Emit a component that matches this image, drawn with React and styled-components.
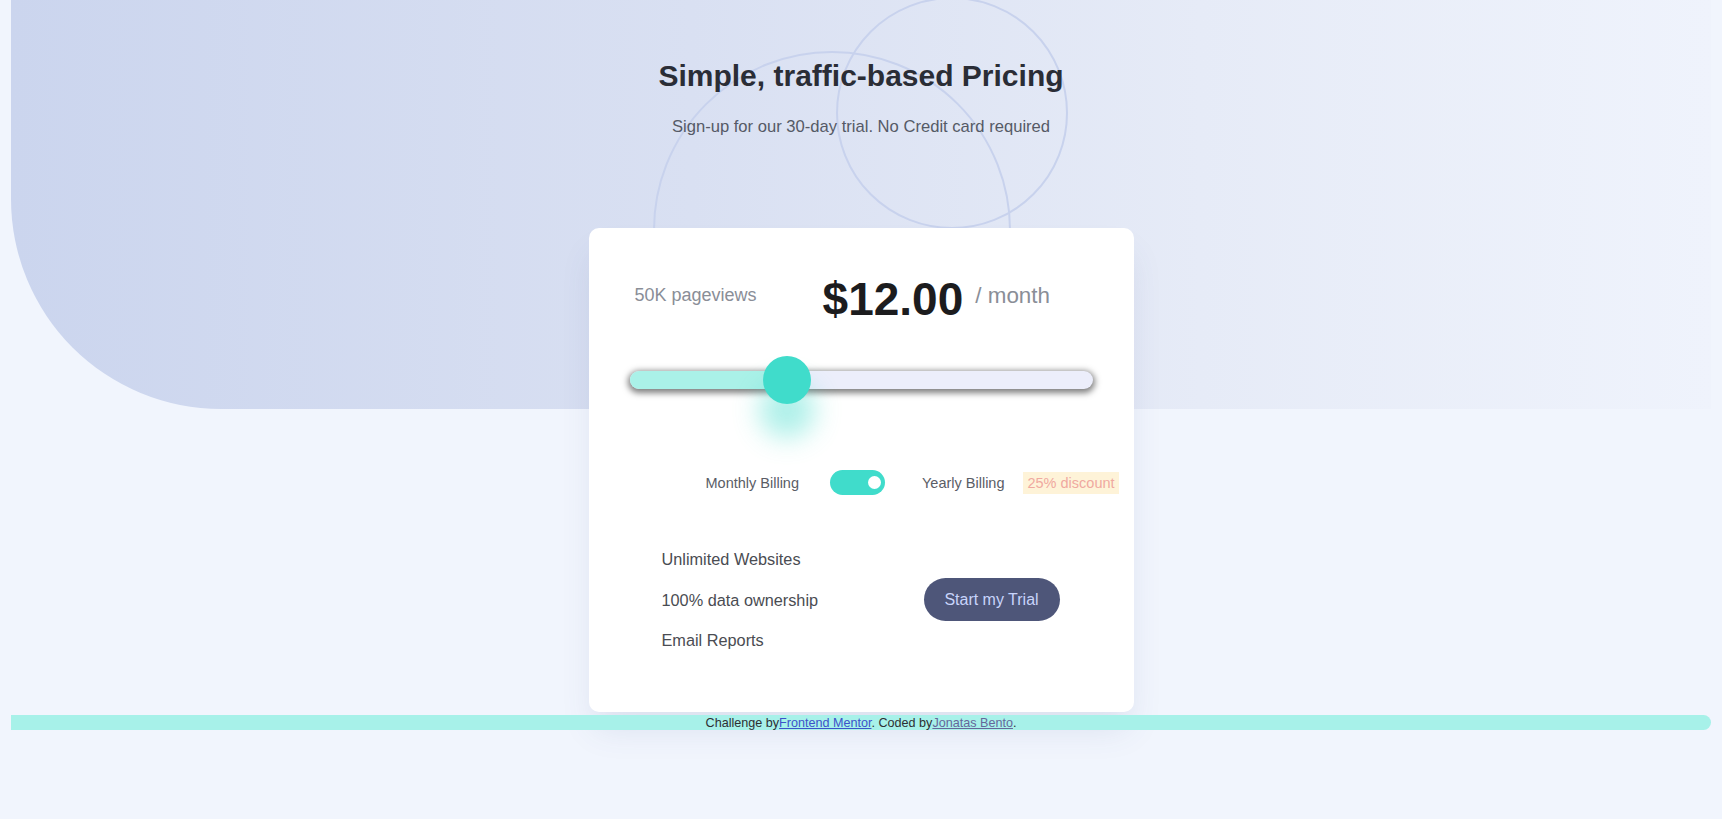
import React from 'react';
import styled, { createGlobalStyle } from 'styled-components';

const GlobalStyle = createGlobalStyle`
  * { box-sizing: border-box; }
  html, body {
    margin: 0;
    padding: 0;
    background: #f1f5fd;
    font-family: "Liberation Sans", Arial, sans-serif;
  }
`;

const Page = styled.div`
  position: relative;
  min-height: 819px;
  padding: 0 11px;
  overflow: hidden;
`;

// top band with the round lower-left corner
const Hero = styled.header`
  position: relative;
  display: flex;
  flex-direction: column;
  align-items: center;
  padding-top: 59px;

  &::before {
    content: '';
    position: absolute;
    top: 0;
    left: 0;
    right: 0;
    height: 409px;
    border-bottom-left-radius: 210px;
    background: linear-gradient(90deg, #cbd5ee 0%, #d9e0f2 40%, #e6ebf7 70%, #eff3fc 100%);
    z-index: 0;
  }
`;

const Pattern = styled.svg`
  position: absolute;
  top: 0;
  left: calc(50% - 211px);
  z-index: 0;
`;

const Title = styled.h1`
  position: relative;
  z-index: 1;
  margin: 0;
  font-size: 30px;
  line-height: 34px;
  font-weight: 700;
  color: #2a2d36;
`;

const Subtitle = styled.p`
  position: relative;
  z-index: 1;
  margin: 24px 0 0;
  font-size: 16.6px;
  line-height: 19px;
  color: #555a66;
`;

const Card = styled.main`
  position: relative;
  z-index: 1;
  width: 545px;
  margin: 92px auto 0;
  padding: 43px 0 51px;
  background: #fff;
  border-radius: 10px;
  box-shadow: 0 22px 34px -6px rgba(70, 85, 140, 0.13);
`;

const PriceRow = styled.div`
  display: flex;
  align-items: center;
  height: 53px;
  padding-left: 46px;
`;

const Views = styled.span`
  margin-top: -4px;
  font-size: 18px;
  color: #8a8e97;
`;

const Price = styled.div`
  display: flex;
  align-items: center;
  gap: 12px;
  margin-left: 66px;
`;

const Amount = styled.span`
  margin-top: 2px;
  font-size: 46px;
  font-weight: 700;
  color: #1c1c1e;
`;

const Period = styled.span`
  margin-top: -3px;
  font-size: 22.4px;
  color: #8a8e97;
`;

const SliderWrap = styled.div`
  position: relative;
  height: 48px;
  margin: 32px 41px 0;
  display: flex;
  align-items: center;
`;

const Track = styled.div`
  width: 100%;
  height: 18px;
  border-radius: 9px;
  background: #eceefb;
  box-shadow: 0 2px 6px 2px rgba(0, 0, 0, 0.5);
  overflow: hidden;
`;

const Fill = styled.div`
  height: 100%;
  background: #aaf1e8;
`;

const Thumb = styled.div`
  position: absolute;
  top: 0;
  width: 48px;
  height: 48px;
  margin-left: -24px;
  border-radius: 50%;
  background: #40dccb;
  box-shadow: 0 30px 26px 4px rgba(64, 220, 203, 0.42);
`;

const BillingRow = styled.div`
  display: flex;
  align-items: center;
  height: 25px;
  margin-top: 66px;
  padding-left: 117px;
  font-size: 14.5px;
  color: #5a5d66;
`;

const Switch = styled.div`
  display: flex;
  align-items: center;
  justify-content: ${p => (p.on ? 'flex-end' : 'flex-start')};
  width: 55px;
  height: 25px;
  margin: 0 37px 0 31px;
  padding: 0 4px;
  border-radius: 13px;
  background: #40dccb;

  &::after {
    content: '';
    width: 13px;
    height: 13px;
    border-radius: 50%;
    background: #fff;
  }
`;

const Discount = styled.span`
  margin-left: 19px;
  padding: 3px 4px;
  background: #fef3d8;
  color: #f0a9a0;
`;

const Bottom = styled.div`
  display: flex;
  align-items: center;
  justify-content: space-between;
  margin-top: 44px;
  padding: 0 74px 0 73px;
`;

const Features = styled.ul`
  margin: 0;
  padding: 0;
  list-style: none;
`;

const Feature = styled.li`
  font-size: 16.3px;
  line-height: 40.5px;
  color: #4a4c52;
`;

const TrialButton = styled.button`
  width: 136px;
  height: 43px;
  border: none;
  border-radius: 22px;
  background: #4e5679;
  color: #c8d4fb;
  font-family: inherit;
  font-size: 16px;
  cursor: pointer;
`;

const Footer = styled.footer`
  position: relative;
  z-index: 2;
  height: 15px;
  margin-top: 3px;
  border-radius: 0 8px 8px 0;
  background: #a7f1e9;
  font-size: 12.6px;
  line-height: 17px;
  text-align: center;
  color: #2d2f33;

  a { color: #3d52c9; }
  a.visited { color: #65679a; }
`;

const App = () => {
  const [yearly, setYearly] = React.useState(true);
  const pos = 34.1;

  return (
    <>
      <GlobalStyle />
      <Page>
        <Hero>
          <Pattern width="430" height="410" viewBox="0 0 430 410" fill="none">
            <circle cx="302" cy="113" r="115" stroke="#c8d2ed" strokeWidth="2" />
            <circle cx="182" cy="230" r="178" stroke="#c8d2ed" strokeWidth="2" />
          </Pattern>
          <Title>Simple, traffic-based Pricing</Title>
          <Subtitle>Sign-up for our 30-day trial. No Credit card required</Subtitle>
        </Hero>

        <Card>
          <PriceRow>
            <Views>50K pageviews</Views>
            <Price>
              <Amount>$12.00</Amount>
              <Period>/ month</Period>
            </Price>
          </PriceRow>

          <SliderWrap>
            <Track>
              <Fill style={{ width: `${pos}%` }} />
            </Track>
            <Thumb style={{ left: `${pos}%` }} />
          </SliderWrap>

          <BillingRow>
            <span>Monthly Billing</span>
            <Switch on={yearly ? 1 : 0} onClick={() => setYearly(!yearly)} />
            <span>Yearly Billing</span>
            <Discount>25% discount</Discount>
          </BillingRow>

          <Bottom>
            <Features>
              <Feature>Unlimited Websites</Feature>
              <Feature>100% data ownership</Feature>
              <Feature>Email Reports</Feature>
            </Features>
            <TrialButton>Start my Trial</TrialButton>
          </Bottom>
        </Card>

        <Footer>
          Challenge by<a href="#">Frontend Mentor</a>. Coded by<a className="visited" href="#">Jonatas Bento</a>.
        </Footer>
      </Page>
    </>
  );
};

export default App;
